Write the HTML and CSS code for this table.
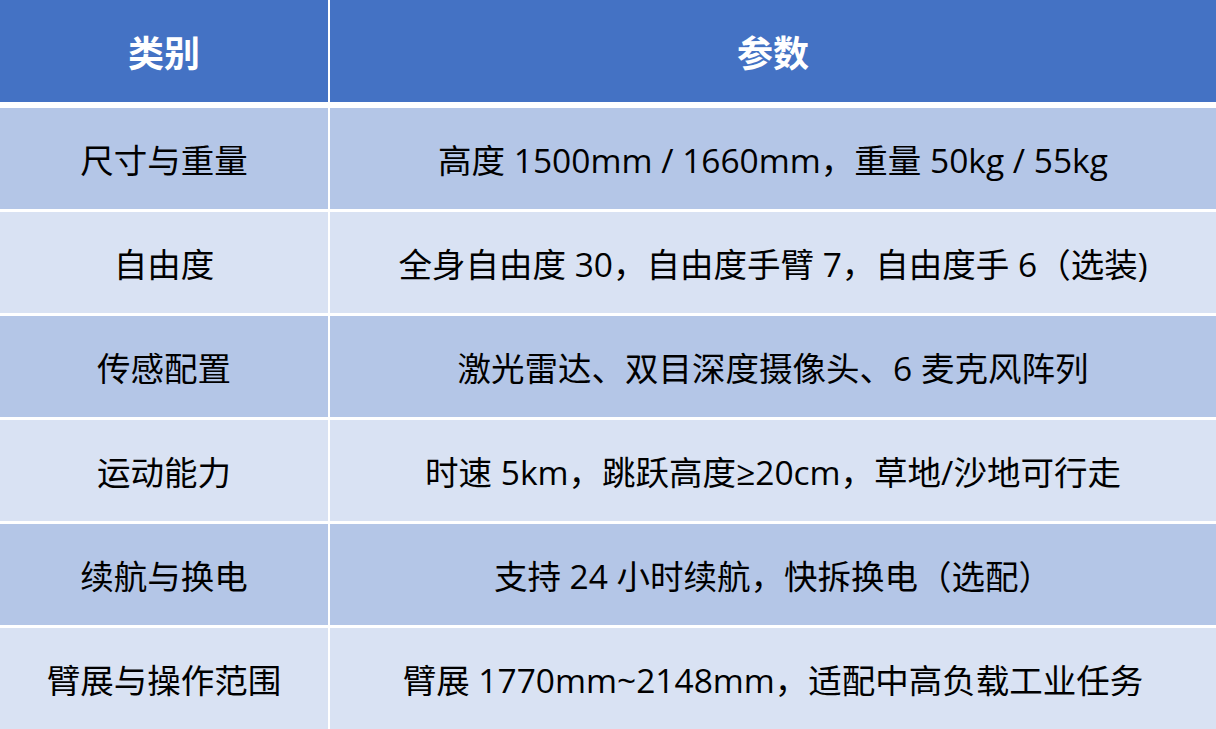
FILE: index.html
```html
<!DOCTYPE html>
<html lang="zh-CN">
<head>
<meta charset="utf-8">
<title>参数表</title>
<link rel="stylesheet" href="styles.css">
</head>
<body>
<div class="table">
  <div class="cell head">类别</div>
  <div class="cell head">参数</div>

  <div class="cell dark">尺寸与重量</div>
  <div class="cell dark">高度 1500mm / 1660mm，重量 50kg / 55kg</div>

  <div class="cell light">自由度</div>
  <div class="cell light">全身自由度 30，自由度手臂 7，自由度手 6（选装)</div>

  <div class="cell dark">传感配置</div>
  <div class="cell dark">激光雷达、双目深度摄像头、6 麦克风阵列</div>

  <div class="cell light">运动能力</div>
  <div class="cell light">时速 5km，跳跃高度≥20cm，草地/沙地可行走</div>

  <div class="cell dark">续航与换电</div>
  <div class="cell dark">支持 24 小时续航，快拆换电（选配）</div>

  <div class="cell light">臂展与操作范围</div>
  <div class="cell light">臂展 1770mm~2148mm，适配中高负载工业任务</div>
</div>
</body>
</html>
```
FILE: styles.css
```css
html, body {
  margin: 0;
  padding: 0;
  background: #ffffff;
}
body {
  font-family: "Open Sans", "Noto Sans CJK SC", sans-serif;
  width: 1216px;
  height: 729px;
  overflow: hidden;
}
.table {
  display: grid;
  grid-template-columns: 328px 886px;
  grid-template-rows: 105px repeat(6, 101px);
  column-gap: 2px;
  row-gap: 3px;
  background: #ffffff;
}
.cell {
  display: flex;
  align-items: center;
  justify-content: center;
  font-size: 33.5px;
  color: #000000;
  white-space: nowrap;
}
.head {
  background: #4472C4;
  color: #ffffff;
  font-weight: 700;
  font-size: 36px;
  margin-bottom: 3px;
}
.dark {
  background: #B4C6E7;
}
.light {
  background: #D9E2F3;
}
```
